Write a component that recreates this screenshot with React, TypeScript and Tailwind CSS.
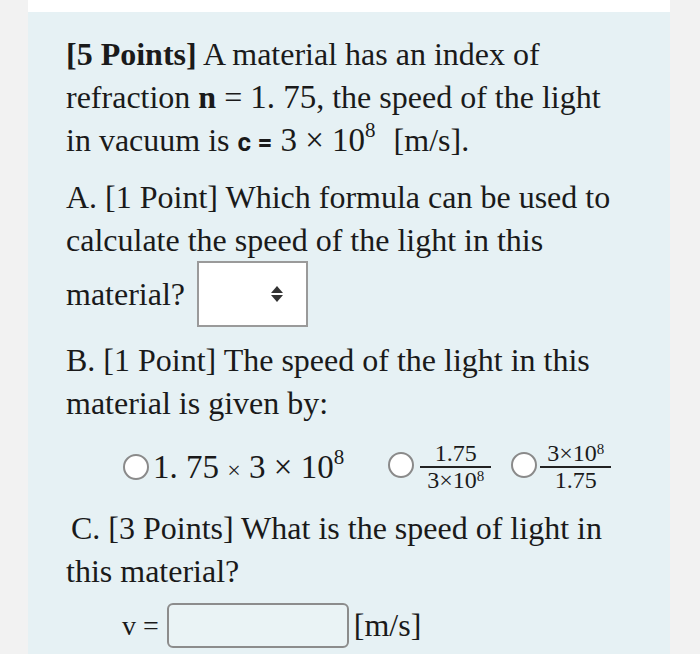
import React from "react";

const serif = { fontFamily: '"Liberation Serif", "Times New Roman", serif' };

const Radio = () => (
  <span className="inline-block w-[26px] h-[26px] rounded-full border-[2.5px] border-[#8a8a8a] bg-white shrink-0" />
);

const Fraction = ({ top, bottom }: { top: React.ReactNode; bottom: React.ReactNode }) => (
  <span className="inline-flex flex-col items-center text-[24px] leading-[25px] px-[2px]" style={serif}>
    <span className="px-[7px]">{top}</span>
    <span className="w-full h-[2px] bg-[#222]" />
    <span className="px-[7px]">{bottom}</span>
  </span>
);

export default function App() {
  return (
    <div className="w-[700px] h-[654px] bg-[#f2f2f2] overflow-hidden">
      <div className="mx-[28px] w-[642px] h-full flex flex-col">
        <div className="h-[12px] bg-white" />
        <div
          className="flex-1 bg-[#e6f1f4] pl-[38px] pt-[21px] text-[32px] leading-[43px] text-[#1a1a1a] whitespace-nowrap"
          style={serif}
        >
          {/* intro */}
          <div>
            <div>
              <b>[5 Points]</b> A material has an index of
            </div>
            <div>
              refraction <b>n</b> = <span className="text-[33px]">1. 75</span>, the speed of the light
            </div>
            <div className="h-[45px]">
              in vacuum is{" "}
              <b style={{ fontFamily: "Roboto, sans-serif" }} className="text-[26px]">
                c =
              </b>{" "}
              <span className="text-[33px]">
                3 × 10<sup className="text-[21px] relative -top-[14px]">8</sup>
              </span>
              <span className="ml-[18px]">[m/s].</span>
            </div>
          </div>

          {/* A */}
          <div className="mt-[12px]">
            <div>A. [1 Point] Which formula can be used to</div>
            <div>calculate the speed of the light in this</div>
            <div className="flex items-center h-[66px] -mt-[1px]">
              <span>material?</span>
              <div className="ml-[12px] w-[111px] h-[66px] bg-white border-[2px] border-[#9a9a9a] flex items-center justify-end pr-[22px]">
                <svg width="14" height="18" viewBox="0 0 14 18">
                  <path d="M7 1 L13 8 L1 8 Z" fill="#333" />
                  <path d="M1 10 L13 10 L7 17 Z" fill="#333" />
                </svg>
              </div>
            </div>
          </div>

          {/* B */}
          <div className="mt-[12px]">
            <div>B. [1 Point] The speed of the light in this</div>
            <div>material is given by:</div>
          </div>

          <div className="mt-[12px] h-[60px] flex items-center pl-[57px]">
            <Radio />
            <span className="text-[33px] ml-[4px] leading-none">
              1. 75 <span className="text-[24px]">×</span> 3 × 10
              <sup className="text-[21px] relative -top-[14px]">8</sup>
            </span>
            <span className="ml-[44px]">
              <Radio />
            </span>
            <span className="ml-[4px] flex items-center">
              <Fraction
                top="1.75"
                bottom={
                  <>
                    3×10<sup className="text-[15px]">8</sup>
                  </>
                }
              />
            </span>
            <span className="ml-[18px]">
              <Radio />
            </span>
            <span className="ml-[1px] flex items-center">
              <Fraction
                top={
                  <>
                    3×10<sup className="text-[15px]">8</sup>
                  </>
                }
                bottom="1.75"
              />
            </span>
          </div>

          {/* C */}
          <div className="mt-[10px]">
            <div className="pl-[5px]">C. [3 Points] What is the speed of light in</div>
            <div>this material?</div>
          </div>

          <div className="mt-[10px] flex items-center pl-[56px]">
            <span className="text-[28px]">v =</span>
            <div className="ml-[8px] w-[182px] h-[45px] rounded-[6px] border-[2px] border-[#8c8c8c] bg-[#eaf3f5]" />
            <span className="ml-[5px] text-[32px]">[m/s]</span>
          </div>
        </div>
      </div>
    </div>
  );
}
